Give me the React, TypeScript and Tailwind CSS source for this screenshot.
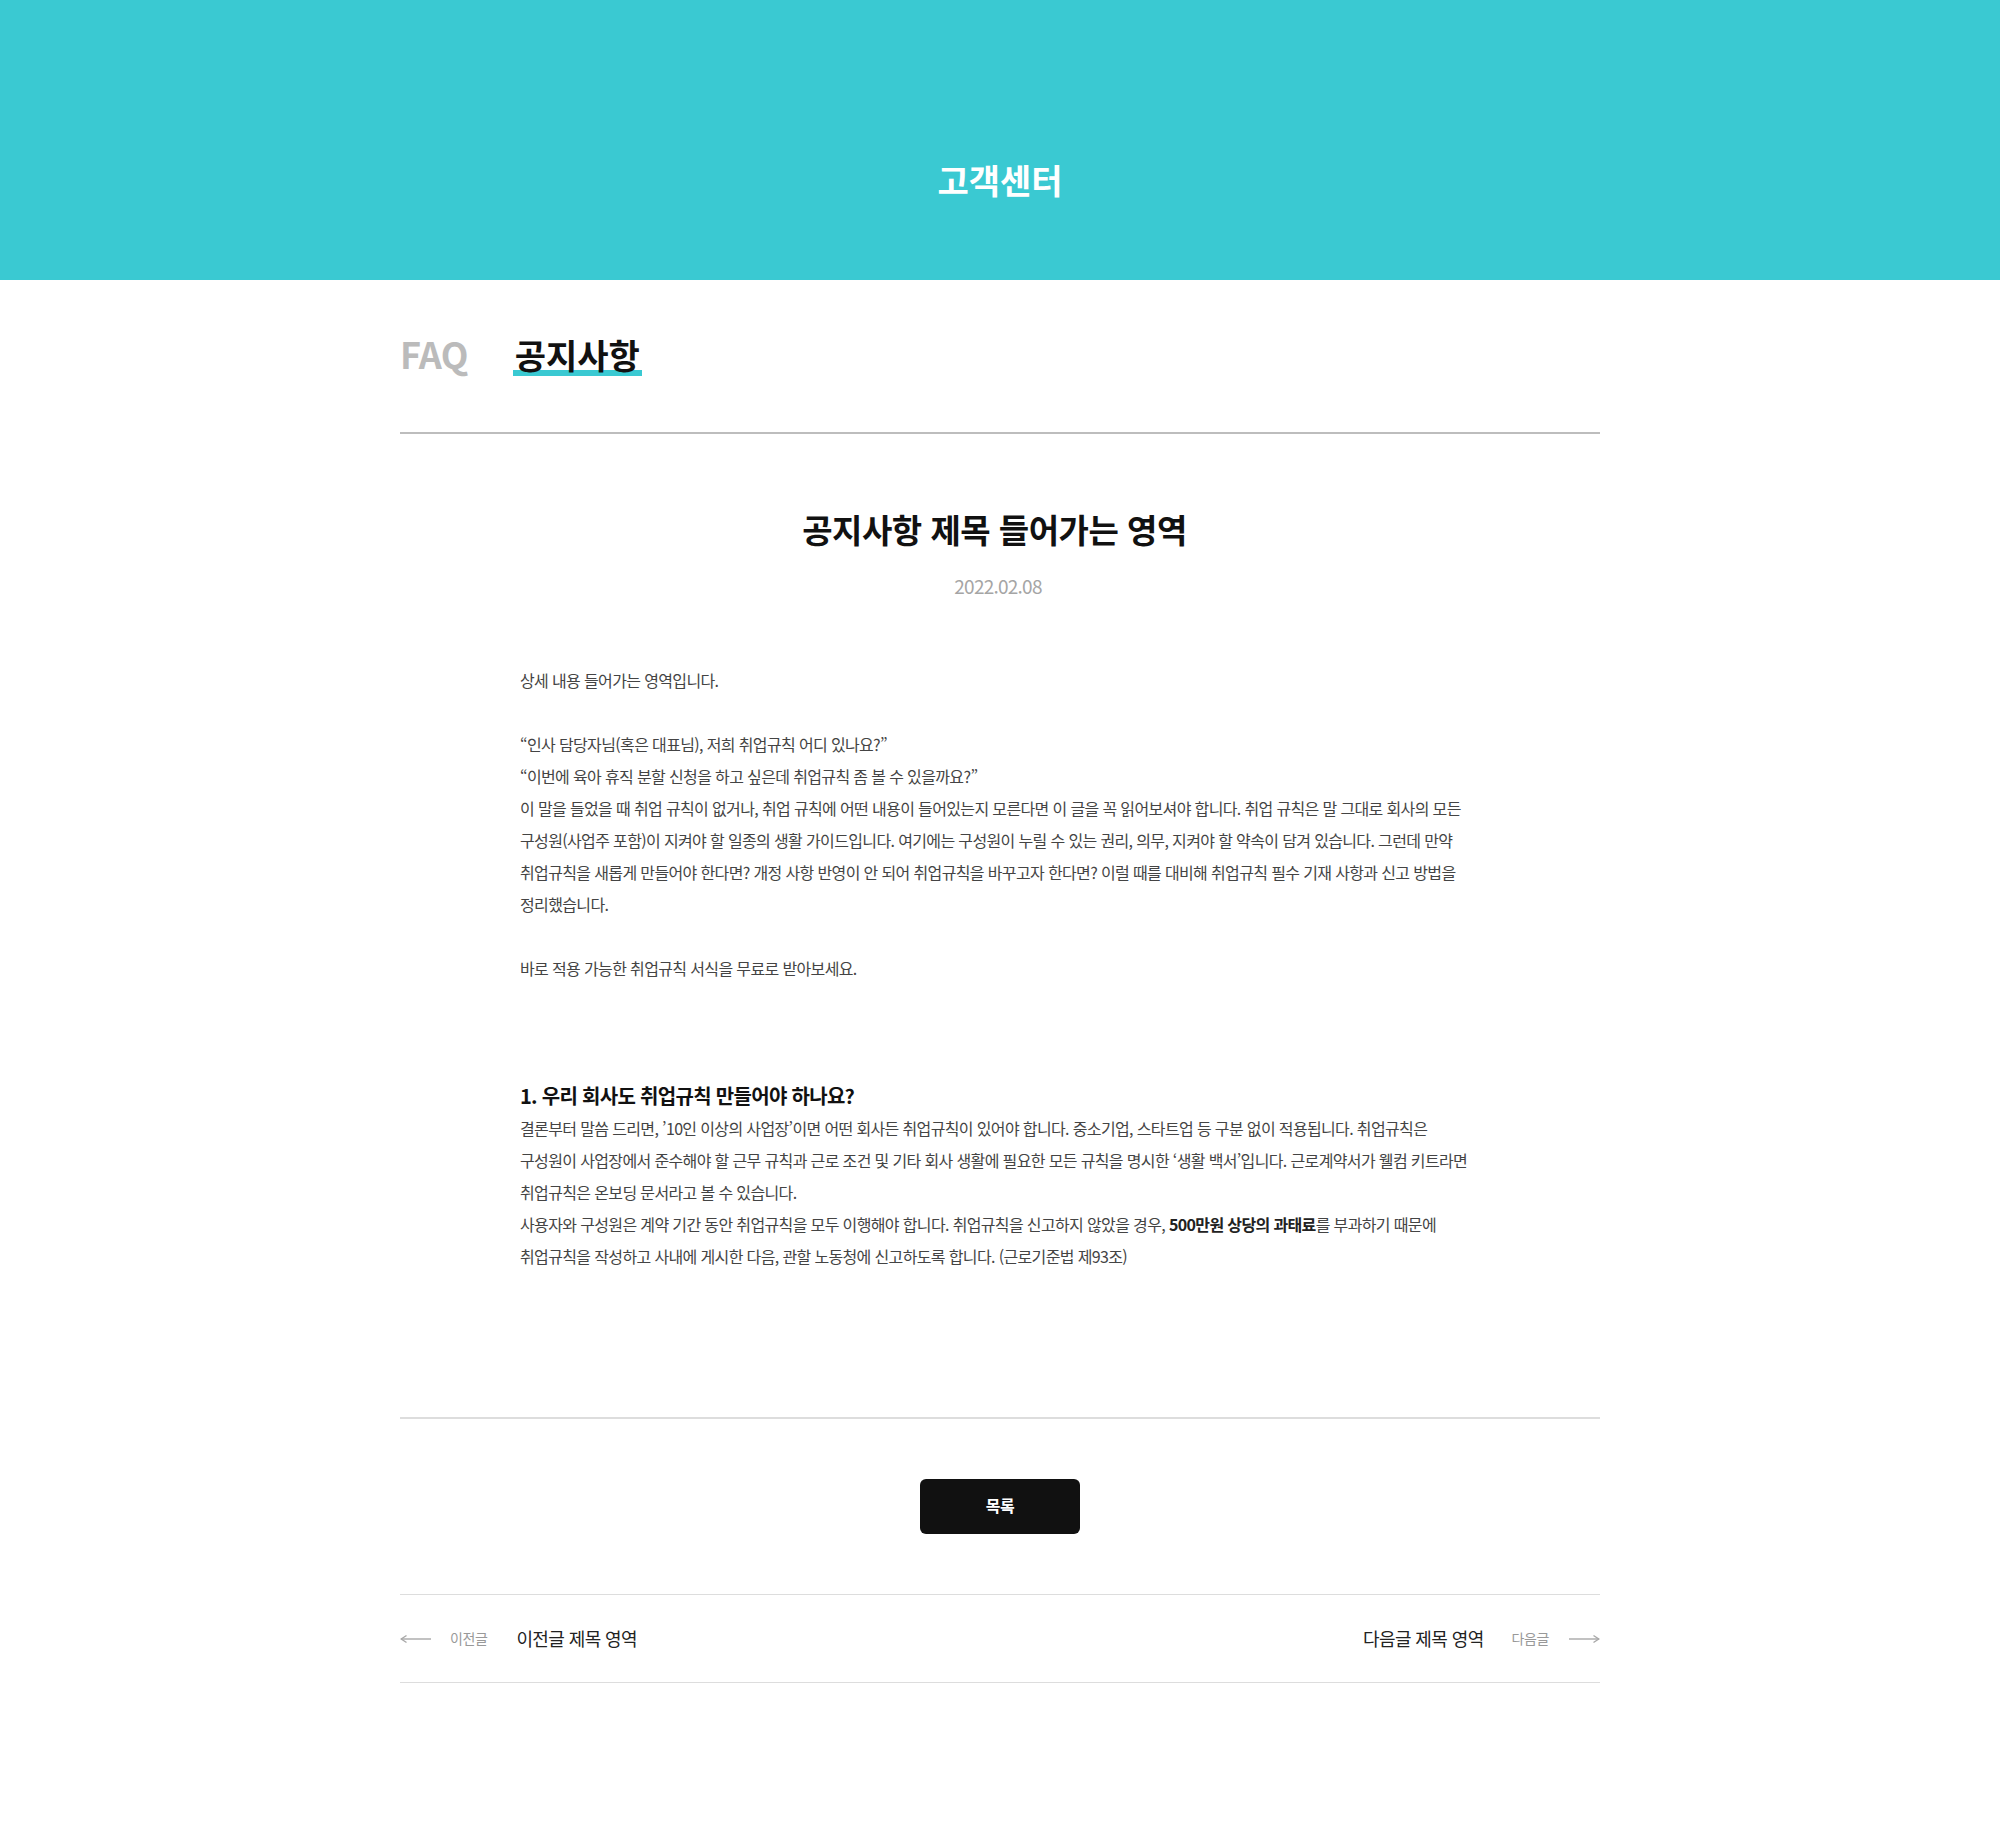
import type { ReactNode } from "react";

const font = "font-['Noto_Sans_CJK_KR','Noto_Sans',sans-serif]";

function Arrow({ dir }: { dir: "left" | "right" }) {
  return (
    <svg
      width="32"
      height="10"
      viewBox="0 0 32 10"
      fill="none"
      stroke="#a8a8a8"
      strokeWidth="1.4"
      className={dir === "right" ? "rotate-180" : ""}
    >
      <path d="M1 5H31" />
      <path d="M6.5 1.5L1.2 5L6.5 8.5" />
    </svg>
  );
}

function Line({ children }: { children: ReactNode }) {
  return <p className="h-8">{children}</p>;
}

export default function App() {
  return (
    <div lang="ko" className={`${font} min-h-[1833px] bg-white text-[#111]`}>
      <header className="flex h-[280px] items-center justify-center bg-[#3ac9d2] pt-[80px]">
        <h1 className="text-[34px] font-bold leading-none text-white">고객센터</h1>
      </header>

      <main className="mx-auto w-[1200px]">
        <nav className="mt-[55px] flex items-baseline gap-[45px]">
          <a className="text-[36px] font-bold leading-none tracking-[-0.02em] text-[#bbbbbb]">FAQ</a>
          <a className="relative z-0 px-[2px] text-[34px] font-bold leading-none text-[#111]">
            공지사항
            <span className="absolute -bottom-[4px] left-0 right-0 -z-10 h-[6px] bg-[#3ac9d2]" />
          </a>
        </nav>
        <div className="mt-[60px] h-[2px] bg-[#bdbdbd]" />

        <article>
          <h2 className="mt-[79px] pr-[11px] text-center text-[33px] font-bold leading-none tracking-[-0.015em] text-[#111]">
            공지사항 제목 들어가는 영역
          </h2>
          <p className="mt-[30px] pr-[4px] text-center text-[19px] leading-none tracking-[-0.04em] text-[#a5a5a5]">
            2022.02.08
          </p>

          <div className="mx-auto mt-[69px] w-[960px] whitespace-nowrap text-[16px] leading-8 tracking-[-0.04em] text-[#444]">
            <Line>상세 내용 들어가는 영역입니다.</Line>
            <Line>{"\u00a0"}</Line>
            <Line>“인사 담당자님(혹은 대표님), 저희 취업규칙 어디 있나요?”</Line>
            <Line>“이번에 육아 휴직 분할 신청을 하고 싶은데 취업규칙 좀 볼 수 있을까요?”</Line>
            <Line>
              이 말을 들었을 때 취업 규칙이 없거나, 취업 규칙에 어떤 내용이 들어있는지 모른다면 이 글을 꼭 읽어보셔야 합니다. 취업 규칙은 말 그대로 회사의 모든
            </Line>
            <Line>
              구성원(사업주 포함)이 지켜야 할 일종의 생활 가이드입니다. 여기에는 구성원이 누릴 수 있는 권리, 의무, 지켜야 할 약속이 담겨 있습니다. 그런데 만약
            </Line>
            <Line>
              취업규칙을 새롭게 만들어야 한다면? 개정 사항 반영이 안 되어 취업규칙을 바꾸고자 한다면? 이럴 때를 대비해 취업규칙 필수 기재 사항과 신고 방법을
            </Line>
            <Line>정리했습니다.</Line>
            <Line>{"\u00a0"}</Line>
            <Line>바로 적용 가능한 취업규칙 서식을 무료로 받아보세요.</Line>

            <h3 className="mt-24 h-8 text-[20px] font-bold tracking-[-0.035em] text-[#111]">
              1. 우리 회사도 취업규칙 만들어야 하나요?
            </h3>
            <Line>
              결론부터 말씀 드리면, ’10인 이상의 사업장’이면 어떤 회사든 취업규칙이 있어야 합니다. 중소기업, 스타트업 등 구분 없이 적용됩니다. 취업규칙은
            </Line>
            <Line>
              구성원이 사업장에서 준수해야 할 근무 규칙과 근로 조건 및 기타 회사 생활에 필요한 모든 규칙을 명시한 ‘생활 백서’입니다. 근로계약서가 웰컴 키트라면
            </Line>
            <Line>취업규칙은 온보딩 문서라고 볼 수 있습니다.</Line>
            <Line>
              사용자와 구성원은 계약 기간 동안 취업규칙을 모두 이행해야 합니다. 취업규칙을 신고하지 않았을 경우,{" "}
              <strong className="font-bold text-[#222]">500만원 상당의 과태료</strong>를 부과하기 때문에
            </Line>
            <Line>취업규칙을 작성하고 사내에 게시한 다음, 관할 노동청에 신고하도록 합니다. (근로기준법 제93조)</Line>
          </div>
        </article>

        <div className="mt-[145px] h-[2px] bg-[#dddddd]" />

        <div className="mt-[60px] flex justify-center">
          <button
            type="button"
            className="flex h-[55px] w-[160px] items-center justify-center rounded-[6px] bg-[#111] pb-[3px] text-[16px] font-bold tracking-[-0.03em] text-white"
          >
            목록
          </button>
        </div>

        <div className="mt-[60px] flex h-[89px] items-center justify-between border-y border-[#dddddd]">
          <a className="flex items-center">
            <Arrow dir="left" />
            <span className="ml-[18px] text-[14px] tracking-[-0.03em] text-[#999]">이전글</span>
            <span className="ml-[29px] text-[18px] tracking-[-0.033em] text-[#222]">이전글 제목 영역</span>
          </a>
          <a className="flex items-center">
            <span className="text-[18px] tracking-[-0.033em] text-[#222]">다음글 제목 영역</span>
            <span className="ml-[28px] text-[14px] tracking-[-0.03em] text-[#999]">다음글</span>
            <span className="ml-[19px] flex">
              <Arrow dir="right" />
            </span>
          </a>
        </div>
      </main>
    </div>
  );
}
